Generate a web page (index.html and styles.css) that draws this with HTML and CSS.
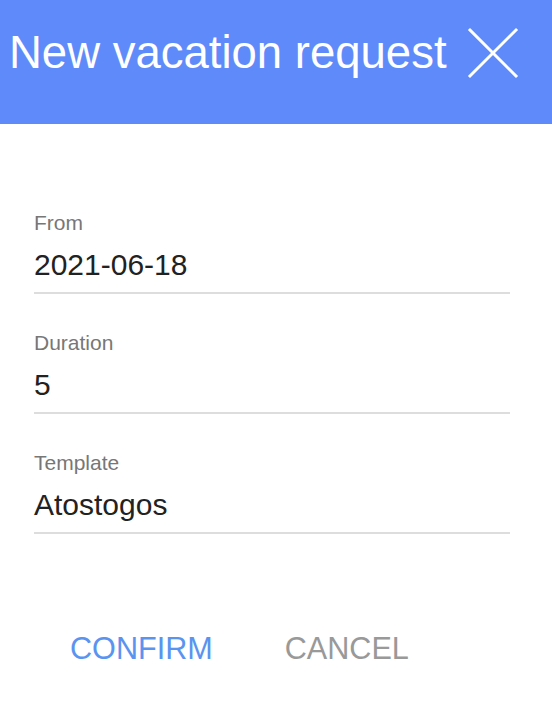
FILE: index.html
```html
<!DOCTYPE html>
<html>
<head>
<meta charset="utf-8">
<link rel="stylesheet" href="styles.css">
</head>
<body>
<header class="header">
  <h1 class="title">New vacation request</h1>
  <button class="close" aria-label="Close">
    <svg width="52" height="52" viewBox="0 0 52 52"><path d="M3 3 L49 49 M49 3 L3 49" stroke="#fff" stroke-width="3" stroke-linecap="square" fill="none"/></svg>
  </button>
</header>
<main class="form">
  <div class="field">
    <div class="label">From</div>
    <div class="value">2021-06-18</div>
  </div>
  <div class="field">
    <div class="label">Duration</div>
    <div class="value">5</div>
  </div>
  <div class="field">
    <div class="label">Template</div>
    <div class="value">Atostogos</div>
  </div>
  <div class="actions">
    <button class="btn confirm">CONFIRM</button>
    <button class="btn cancel">CANCEL</button>
  </div>
</main>
</body>
</html>
```
FILE: styles.css
```css
* { box-sizing: border-box; }
html, body { margin: 0; padding: 0; background: #fff; }
body { font-family: "Liberation Sans", Arial, Helvetica, sans-serif; width: 552px; height: 710px; overflow: hidden; }
.header {
  height: 124px;
  background: #5f8bfa;
  display: flex;
  align-items: center;
  justify-content: space-between;
  padding: 0 33px 0 9px;
}
.title {
  margin: 0;
  font-weight: normal;
  font-size: 45.5px;
  line-height: 52px;
  color: #fff;
  padding-bottom: 18px;
  white-space: nowrap;
}
.close {
  background: none;
  border: 0;
  padding: 0;
  margin: 0 0 18px 0;
  width: 52px;
  height: 52px;
  display: block;
}
.close svg { display: block; }
.form { padding: 87px 42px 0 34px; }
.field { margin-bottom: 37px; border-bottom: 2px solid #dddddd; padding-bottom: 10px; }
.label { font-size: 21px; line-height: 24px; color: #777; }
.value { font-size: 30px; line-height: 34px; color: #222; margin-top: 13px; }
.actions { display: flex; gap: 72px; padding-left: 36px; margin-top: 97px; }
.btn { background: none; border: 0; padding: 0; font-family: inherit; font-size: 30.6px; line-height: 34px; }
.confirm { color: #5b94f0; }
.cancel { color: #999; }
```
